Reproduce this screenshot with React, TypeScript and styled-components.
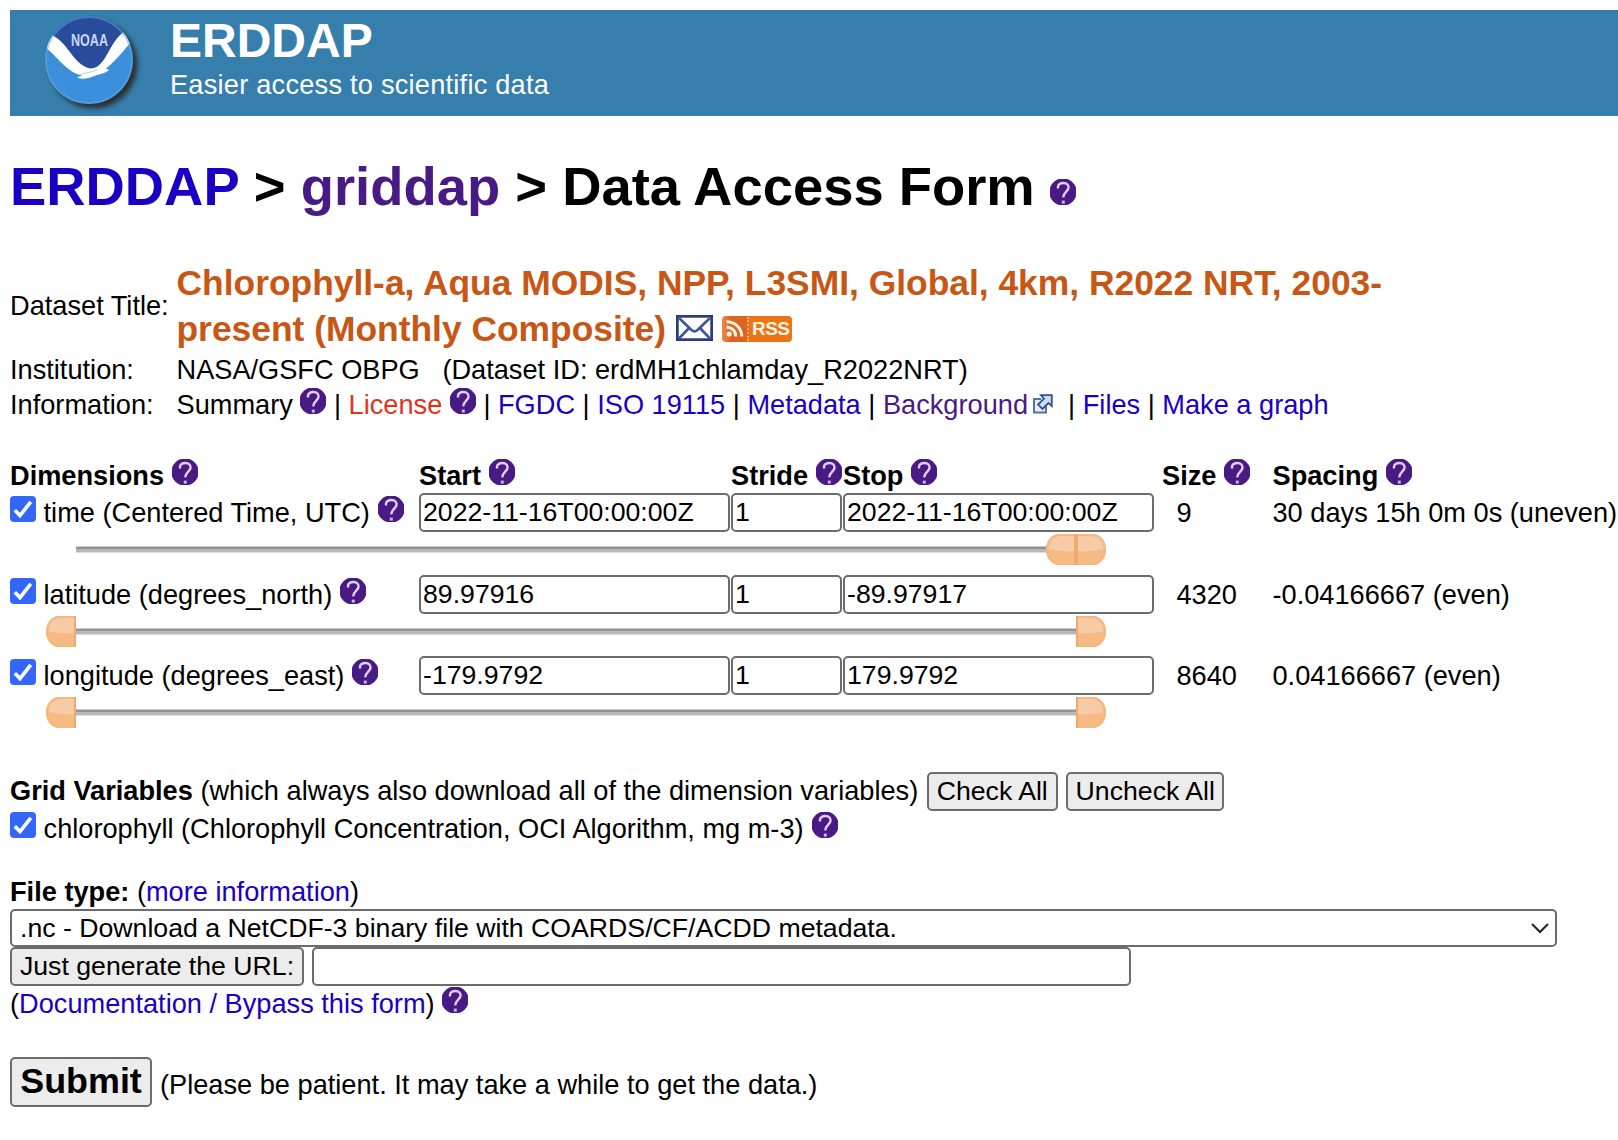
import React from "react";
import styled, { createGlobalStyle } from "styled-components";

const GlobalStyle = createGlobalStyle`
  html, body { margin: 0; padding: 0; background: #fff; overflow: hidden; }
  * { box-sizing: border-box; }
`;

const sans = `"Liberation Sans", Arial, sans-serif`;

const Page = styled.main`
  display: flex;
  flex-direction: column;
  width: 1618px;
  height: 1140px;
  padding: 10px 0 0 10px;
  overflow: hidden;
  background: #fff;
  color: #000;
  font-family: ${sans};
  font-size: 27.2px;
  line-height: 35px;
  white-space: nowrap;
`;

const Banner = styled.header`
  display: flex;
  flex: none;
  height: 106px;
  padding-left: 31px;
  background: #367fac;
  color: #fff;
`;

const BannerText = styled.div`
  display: flex;
  flex-direction: column;
  padding-left: 27px;
`;

const SiteName = styled.div`
  height: 61px;
  line-height: 62px;
  font-size: 48px;
  font-weight: bold;
`;

const Tagline = styled.div`
  line-height: 27px;
  letter-spacing: 0.23px;
`;

const Heading = styled.h1`
  flex: none;
  margin: 35px 0 0;
  height: 72px;
  line-height: 72px;
  font-size: 54.4px;
  font-weight: bold;
`;

const Link = styled.a<{ $tone?: "link" | "visited" | "alert" }>`
  text-decoration: none;
  cursor: pointer;
  color: ${(p) => (p.$tone === "visited" ? "#481a83" : p.$tone === "alert" ? "#e3331d" : "#1a00c4")};
`;

const Info = styled.section`
  display: grid;
  flex: none;
  grid-template-columns: 166.5px 1fr;
  grid-template-rows: 92px 35px 35px;
  align-items: center;
  margin-top: 37px;
`;

const TitleLabel = styled.div`
  padding-bottom: 2px;
`;

const DatasetTitle = styled.div`
  font-size: 35.4px;
  line-height: 46px;
  font-weight: bold;
  color: #c85614;
`;

const Dimensions = styled.section`
  display: grid;
  flex: none;
  grid-template-columns: 409px 312px 112px 319px 110.5px 1fr;
  grid-template-rows: 35px repeat(3, 39px 42.5px);
  margin-top: 36px;
`;

const ColumnHead = styled.div`
  font-weight: bold;
`;

const Cell = styled.div<{ $indent?: number }>`
  display: flex;
  align-items: center;
  line-height: 39px;
  padding-left: ${(p) => p.$indent ?? 0}px;
`;

const CheckLine = styled.label<{ $height: number }>`
  display: block;
  flex: none;
  height: ${(p) => p.$height}px;
  line-height: ${(p) => p.$height}px;
`;

const TextField = styled.input<{ $width: number }>`
  appearance: none;
  flex: none;
  width: ${(p) => p.$width}px;
  height: 39px;
  margin: 0;
  padding: 0 2px;
  border: 2px solid #6c6c6c;
  border-radius: 5px;
  background: #fff;
  color: #000;
  font: 26.67px ${sans};
  outline: none;
`;

const SliderRow = styled.div`
  grid-column: 1 / -1;
  display: flex;
  align-items: flex-start;
  padding: 2px 0 0 36px;
`;

const Track = styled.div<{ $width: number; $offset: number }>`
  width: ${(p) => p.$width}px;
  height: 7px;
  margin: 12px 0 0 ${(p) => p.$offset}px;
  background: linear-gradient(#c9c9c9 0 1px, #929292 1px 3px, #b9b9b9 3px 6px, #dcdcdc 6px 7px);
`;

const Button = styled.button<{ $width: number; $big?: boolean }>`
  flex: none;
  width: ${(p) => p.$width}px;
  height: ${(p) => (p.$big ? 50 : 39)}px;
  margin: 0;
  padding: 0 0 ${(p) => (p.$big ? 2 : 0)}px;
  border: 2px solid #6c6c6c;
  border-radius: 5px;
  background: #ececec;
  color: #000;
  font: ${(p) => (p.$big ? "bold 35.9px" : "26.67px")} ${sans};
`;

const GridVariables = styled.section`
  display: flex;
  flex: none;
  flex-direction: column;
  margin-top: 34.5px;
`;

const ButtonLine = styled.div<{ $gap: number }>`
  display: flex;
  flex: none;
  height: 39px;
  line-height: 37px;
  gap: ${(p) => p.$gap}px;
`;

const FileType = styled.section`
  display: flex;
  flex: none;
  flex-direction: column;
  margin-top: 28px;
`;

const Line = styled.div`
  flex: none;
  height: 35px;
`;

const SelectWrap = styled.div`
  display: flex;
  position: relative;
  width: 1547px;
  height: 38px;
`;

const Select = styled.select`
  appearance: none;
  width: 100%;
  height: 38px;
  padding: 0 8px;
  border: 2px solid #6c6c6c;
  border-radius: 5px;
  background: #fff;
  color: #000;
  font: 26.67px ${sans};
`;

const Chevron = styled.svg`
  position: absolute;
  right: 7px;
  top: 13px;
`;

const SubmitLine = styled.div`
  display: flex;
  flex: none;
  gap: 8px;
  margin-top: 36px;
  height: 50px;
  line-height: 55px;
`;

const InlineSvg = styled.svg<{ $gap?: number }>`
  display: inline-block;
  vertical-align: baseline;
  margin-left: ${(p) => p.$gap ?? 0}px;
`;

const Badge = styled.span`
  display: inline-flex;
  align-items: center;
  vertical-align: 3px;
  width: 70px;
  height: 26px;
  margin-left: 9px;
  padding-left: 4px;
  border-radius: 4px;
  background: linear-gradient(90deg, #ec8a4c 0, #db6420 9px 25px, #ec7414 25px);
  color: #fff4e4;
  font: bold 19px "Liberation Sans", sans-serif;
`;

const BadgeLabel = styled.span`
  margin-left: 2px;
  padding-left: 3px;
  border-left: 2px dotted #f3a86c;
  line-height: 24px;
  letter-spacing: -0.6px;
`;

const Help = ({ gap }: { gap?: number }) => (
  <InlineSvg $gap={gap ?? 0} width="26" height="26" viewBox="0 0 26 26">
    <path d="M9 0H17C21 1 25 5 26 9V17C25 21 21 25 17 26H9C5 25 1 21 0 17V9C1 5 5 1 9 0Z" fill="#481a83" />
    <path d="M8 9.6V7.6C8.5 5 10.6 4 13.4 4C17.2 4 18.8 6.2 18.5 9C18.2 12.4 13.4 13.4 13.2 18.4" fill="none" stroke="#e2cff0" strokeWidth="2.4" />
    <rect x="11.8" y="21.6" width="3" height="3" fill="#cdb4e2" />
  </InlineSvg>
);

const CheckBox = () => (
  <InlineSvg width="26" height="26" viewBox="0 0 26 26">
    <rect width="26" height="26" rx="4" fill="#3367fb" />
    <path d="M4.8 14.2L10 19.6L20.8 5.8" fill="none" stroke="#fff" strokeWidth="3.6" />
  </InlineSvg>
);

const Handle = ({ side }: { side: "left" | "right" }) => (
  <svg width="30" height="31" viewBox="0 0 30 31" transform={side === "right" ? "scale(-1 1)" : undefined}>
    <path d="M30 0H12C5 1 0 7 0 15.5C0 24 5 30 12 31H30Z" fill="#f4b57a" />
    <path d="M28 2H13C6 3 2.5 8 2 18H28Z" fill="#f7cba5" />
    <path d="M28 17C20 18 10 17 2 15C3 24 7 28 13 29H28Z" fill="#f5bb82" />
    <path d="M29 1H12.5C6 2 1 7.5 1 15.5C1 23.5 6 29 12.5 30H29Z" fill="none" stroke="#f5b883" strokeWidth="2" />
    <path d="M29 0V31" stroke="#f0aa6c" strokeWidth="2" />
  </svg>
);

const Mail = () => (
  <InlineSvg $gap={10} width="37" height="26" viewBox="0 0 37 26">
    <rect x="1.3" y="1.3" width="34.4" height="23.4" fill="#fff" stroke="#263c7c" strokeWidth="2.8" />
    <path d="M3 3L15.5 15Q18.5 17.6 21.5 15L34 3M3 23.5L13.5 12.5M34 23.5L23.5 12.5" fill="none" stroke="#3f5694" strokeWidth="2.6" />
  </InlineSvg>
);

const Feed = () => (
  <svg width="19" height="18" viewBox="0 0 19 18">
    <circle cx="3.2" cy="14" r="2.6" fill="#fff0e0" />
    <path d="M0.5 7.3C6 7.3 9.8 11 9.8 16.6M0.5 1.8C9 1.8 15.8 8 15.8 16.6" fill="none" stroke="#fff0e0" strokeWidth="3" />
  </svg>
);

const External = () => (
  <InlineSvg $gap={4} width="21" height="20" viewBox="0 0 21 20">
    <path d="M9 5H2V18.5H14V12" fill="#e8eef8" stroke="#5870a5" strokeWidth="2" />
    <path d="M9 1.2H19.8V12L16.5 9L10.5 15L6 10.6L12 4.6Z" fill="#c8dcf4" stroke="#31518f" strokeWidth="1.8" />
  </InlineSvg>
);

const Logo = () => (
  <svg width="102" height="106" viewBox="0 0 102 106">
    <defs>
      <filter id="shade" x="-20%" y="-20%" width="150%" height="150%">
        <feDropShadow dx="4.5" dy="4.5" stdDeviation="2.8" floodColor="#2c2d30" floodOpacity="1" />
      </filter>
      <clipPath id="disc"><circle cx="48" cy="50" r="44" /></clipPath>
    </defs>
    <circle cx="48" cy="50" r="44" fill="#3a8fdb" filter="url(#shade)" />
    <g clipPath="url(#disc)">
      <path d="M0 0H100V26C82 30 72 59 54 61C35 60 28 33 6 26Z" fill="#284c9b" />
      <path d="M10 25C27 31 31 54 49 58.5C67 58.5 67 28 88 19L93 29C84 38 78 48 65 58.5L68 60C64 64 57 64 52 66.5C47 68.5 41 70 36 67.5L41 65.5C25 62 16 46 3 36Z" fill="#fff" />
      <path d="M39 64.5C45 62.5 50 62.5 56 60" fill="none" stroke="#b7cce9" />
    </g>
    <circle cx="48" cy="50" r="43" fill="none" stroke="#69a9dc" strokeWidth="1.8" opacity=".5" />
    <text x="30" y="35.5" textLength="37" lengthAdjust="spacingAndGlyphs" fontFamily="Liberation Sans, sans-serif" fontSize="16.5" fontWeight="bold" fill="#c9d7f1">NOAA</text>
  </svg>
);

const rows = [
  { label: "time (Centered Time, UTC)", start: "2022-11-16T00:00:00Z", stop: "2022-11-16T00:00:00Z", size: "9", spacing: "30 days 15h 0m 0s (uneven)", atEnd: true },
  { label: "latitude (degrees_north)", start: "89.97916", stop: "-89.97917", size: "4320", spacing: "-0.04166667 (even)", atEnd: false },
  { label: "longitude (degrees_east)", start: "-179.9792", stop: "179.9792", size: "8640", spacing: "0.04166667 (even)", atEnd: false },
];

const heads = ["Dimensions", "Start", "Stride", "Stop", "Size", "Spacing"];

export default function App() {
  return (
    <Page>
      <GlobalStyle />
      <Banner>
        <Logo />
        <BannerText>
          <SiteName>ERDDAP</SiteName>
          <Tagline>Easier access to scientific data</Tagline>
        </BannerText>
      </Banner>

      <Heading>
        <Link>ERDDAP</Link> &gt; <Link $tone="visited">griddap</Link> &gt; Data Access Form <Help />
      </Heading>

      <Info>
        <TitleLabel>Dataset Title:</TitleLabel>
        <DatasetTitle>
          Chlorophyll-a, Aqua MODIS, NPP, L3SMI, Global, 4km, R2022 NRT, 2003-
          <br />
          present (Monthly Composite)
          <Mail />
          <Badge><Feed /><BadgeLabel>RSS</BadgeLabel></Badge>
        </DatasetTitle>
        <div>Institution:</div>
        <div>NASA/GSFC OBPG &nbsp; (Dataset ID: erdMH1chlamday_R2022NRT)</div>
        <div>Information:</div>
        <div>
          Summary <Help /> | <Link $tone="alert">License</Link> <Help /> | <Link>FGDC</Link> | <Link>ISO 19115</Link> |{" "}
          <Link>Metadata</Link> | <Link $tone="visited">Background</Link>
          <External /> &nbsp;| <Link>Files</Link> | <Link>Make a graph</Link>
        </div>
      </Info>

      <Dimensions>
        {heads.map((h) => (
          <ColumnHead key={h}>{h} <Help /></ColumnHead>
        ))}
        {rows.map((r) => (
          <React.Fragment key={r.label}>
            <CheckLine $height={39}><CheckBox /> {r.label} <Help gap={0.5} /></CheckLine>
            <Cell><TextField $width={311} defaultValue={r.start} /></Cell>
            <Cell><TextField $width={111} defaultValue="1" /></Cell>
            <Cell><TextField $width={311} defaultValue={r.stop} /></Cell>
            <Cell $indent={14.5}>{r.size}</Cell>
            <Cell>{r.spacing}</Cell>
            <SliderRow>
              {!r.atEnd && <Handle side="left" />}
              <Track $width={r.atEnd ? 970 : 999.5} $offset={r.atEnd ? 30 : 0} />
              {r.atEnd && <Handle side="left" />}
              <Handle side="right" />
            </SliderRow>
          </React.Fragment>
        ))}
      </Dimensions>

      <GridVariables>
        <ButtonLine $gap={8.5}>
          <span><b>Grid Variables</b> (which always also download all of the dimension variables)</span>
          <Button $width={131}>Check All</Button>
          <Button $width={158}>Uncheck All</Button>
        </ButtonLine>
        <CheckLine $height={35}><CheckBox /> chlorophyll (Chlorophyll Concentration, OCI Algorithm, mg m-3) <Help gap={1} /></CheckLine>
      </GridVariables>

      <FileType>
        <Line><b>File type:</b> (<Link>more information</Link>)</Line>
        <SelectWrap>
          <Select>
            <option>.nc - Download a NetCDF-3 binary file with COARDS/CF/ACDD metadata.</option>
          </Select>
          <Chevron width="20" height="12" viewBox="0 0 20 12">
            <path d="M2 2L10 10L18 2" fill="none" stroke="#222" strokeWidth="2" />
          </Chevron>
        </SelectWrap>
        <ButtonLine $gap={8}>
          <Button $width={294}>Just generate the URL:</Button>
          <TextField $width={819} />
        </ButtonLine>
        <Line>(<Link>Documentation / Bypass this form</Link>) <Help /></Line>
      </FileType>

      <SubmitLine>
        <Button $width={142} $big>Submit</Button>
        <span>(Please be patient. It may take a while to get the data.)</span>
      </SubmitLine>
    </Page>
  );
}
